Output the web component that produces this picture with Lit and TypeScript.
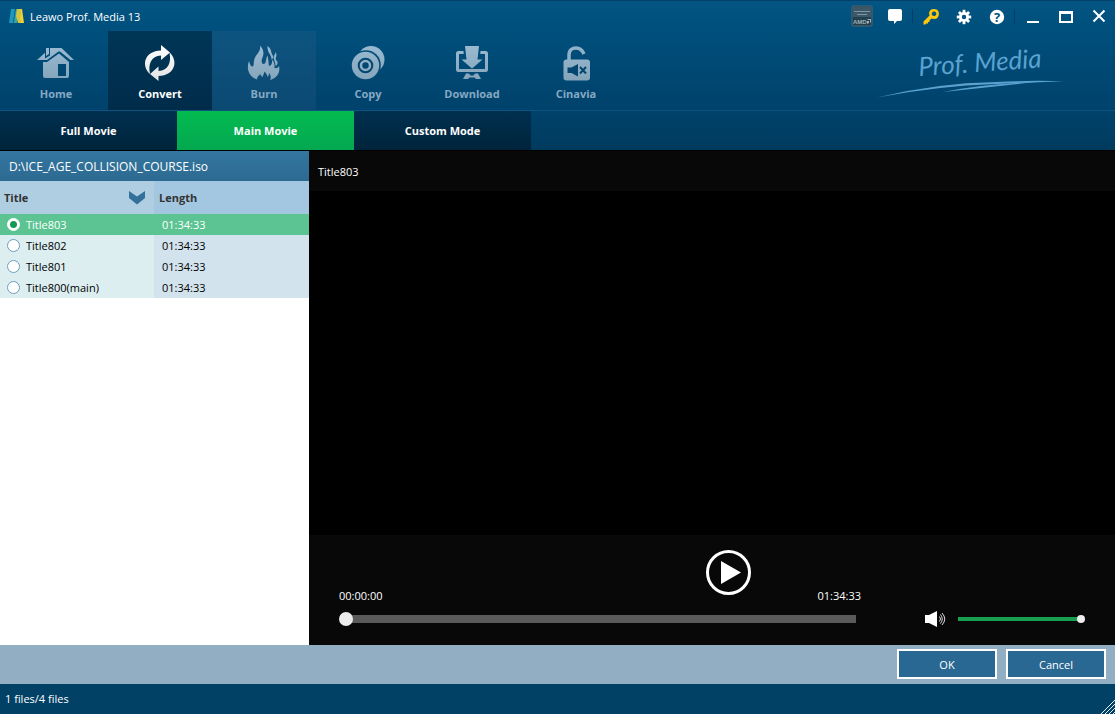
import { LitElement, html, css, svg } from "lit";
import { customElement, property, state } from "lit/decorators.js";
import { classMap } from "lit/directives/class-map.js";

const navIcons: Record<string, unknown> = {
  Home: svg`
    <path d="M1 20 12.5 9.5V8H25.5L38 20H34.5L24 11.5H22.5L11 20Z"/>
    <path class="cut" d="M9 6.5h5v9l-5 3z"/>
    <path d="M10 8h3v6l-3 2z"/>
    <path fill-rule="evenodd" d="M7 22H11L23 13.5 33 22V36a2 2 0 0 1-2 2H9a2 2 0 0 1-2-2ZM22 24V36H30V24Z"/>`,
  Convert: svg`
    <path d="M10 34C1 26 4 11 21 10.5V5L30 12.5 21 20V15.5C11 16 8 24 10 34Z"/>
    <path d="M29.5 12.5C38.5 20.5 35.5 35.5 18.5 36V41L10 34 18.5 26.5V31C28.5 30.5 31.5 22.5 29.5 12.5Z"/>`,
  Burn: svg`
    <path d="M13 39.5C5 36.5 2 29 5 21C6 25 7 26.5 8.5 26.5C10.5 26.5 9 22 11 17.5C13 13.5 17 11 16 5.5C20 9.5 20 14 18.5 17.5C17 21 17.5 24 19.5 24C22.5 24 21.5 19 23.5 15.5C24.5 20 24.5 23 25 26C27.5 25.5 28.5 23 28 19.5C31 22.5 30.5 25.5 30.5 28C33 28.5 34.5 27.5 35 26C36.5 32 33.5 38 26 40C27.5 37 26.5 35 25 33C25 35 24.5 36 23.5 37C23 34.500 22 33 20.500 31.500C20 34 19 35 18.500 37C17 36 16.500 35 16.500 34C14 36 13 37.500 13 39.500Z"/>
    <path d="M23.5 6C28 9 26.5 12 28.5 15C30 17.5 28.5 19 27.5 19.5C28 15 23 13 23.5 6Z"/>
    <path d="M31.5 12C34.5 16 29.5 18 33 21C34.5 23 33 25.5 31.5 26C32 21.5 28.5 19 30 16C30.5 14.5 31.5 14 31.5 12Z"/>`,
  Copy: svg`
    <circle cx="23" cy="19.5" r="13.5"/>
    <circle class="cut" cx="18" cy="25" r="14.8"/>
    <circle cx="17.5" cy="25.5" r="13.7"/>
    <circle class="ring" cx="17.5" cy="25.5" r="6.8"/>
    <circle class="hole" cx="17.5" cy="25.5" r="3.2"/>`,
  Download: svg`
    <path fill-rule="evenodd" d="M6.5 11H33.5A2.5 2.5 0 0 1 36 13.5V29.5A2.5 2.5 0 0 1 33.5 32H6.5A2.5 2.5 0 0 1 4 29.5V13.5A2.5 2.5 0 0 1 6.5 11ZM7 14V29H33V14Z"/>
    <path class="cut" d="M11 5H29L28 17H33L22 29H18L7 17H12Z"/>
    <path d="M13 6H27L25.5 19.5H30.5L20 28.5 9.5 19.5H14.5Z"/>
    <path d="M14 33.5h3l1.500 2h3l1.500-2h3L29 39h-5l-1.500-1.500h-5L16 39h-5Z"/>`,
  Cinavia: svg`
    <path class="line" d="M13 20.5V15C13 10 16.5 8 20 8C24 8 26.500 10.5 28 14"/>
    <rect x="7.5" y="19.5" width="26.5" height="21" rx="3"/>
    <path class="hole" d="M11.5 27.5h4L22 24V36.5l-6.5-3.5h-4Z"/>
    <path class="cross" d="M24 27l6 6.5M30 27l-6 6.5"/>`,
};

@customElement("nav-item")
export class NavItem extends LitElement {
  @property() label = "";
  @property({ type: Boolean, reflect: true }) active = false;
  @property({ type: Boolean, reflect: true }) hot = false;

  static styles = css`
    :host { display: block; width: 104px; }
    .item {
      display: flex; flex-direction: column; align-items: center;
      box-sizing: border-box; width: 100%; height: 79px; padding: 9px 0 0;
      border: 0; background: transparent; color: #86a9c3;
      font: bold 11px/20px "Open Sans", "Noto Sans", sans-serif; cursor: pointer;
    }
    .active { background: linear-gradient(#003658, #002c49); color: #fff; }
    .hot { background: linear-gradient(#0d5480, #0b4972); }
    .icon { display: block; width: 44px; height: 44px; margin-left: 4px; fill: url(#shade); }
    .cut { fill: #034b76; }
    .hole { fill: #03466f; }
    .ring { fill: none; stroke: #03466f; stroke-width: 2; }
    .line { fill: none; stroke: #91b1c8; stroke-width: 3.5; }
    .cross { fill: none; stroke: #03466f; stroke-width: 2; }
  `;

  render() {
    const [a, b] = this.active ? ["#ffffff", "#e2e2e2"] : ["#9bbbd3", "#84a4b9"];
    return html`<button class=${classMap({ item: true, active: this.active, hot: this.hot })}>
      <svg class="icon" viewBox="0 0 44 44" aria-hidden="true">
        <defs>
          <linearGradient id="shade" gradientUnits="userSpaceOnUse" x1="0" y1="5" x2="0" y2="41">
            <stop offset="0" stop-color=${a} /><stop offset="1" stop-color=${b} />
          </linearGradient>
        </defs>
        ${navIcons[this.label]}
      </svg>
      <span>${this.label}</span>
    </button>`;
  }
}

@customElement("title-bar")
export class TitleBar extends LitElement {
  static styles = css`
    :host { display: flex; align-items: center; height: 30px; padding-left: 8px; color: #fff; }
    .logo { width: 17px; height: 16px; margin-right: 5px; }
    .name { flex: 1; margin: 0; padding-top: 2px; font: 11px/18px "Open Sans", "Noto Sans", sans-serif; }
    .ctl {
      display: grid; place-items: center; width: 33px; height: 30px; padding: 0;
      border: 0; background: none; color: #fff; cursor: pointer;
    }
    .ctl svg { width: 22px; height: 22px; fill: currentColor; }
    .key { color: #fdc70c; }
    .sep { width: 1px; height: 15px; margin: 0 1px; background: #033e66; }
    .badge { font: bold 6px "Liberation Sans", sans-serif; fill: #9fb0ba; }
    .stroke { fill: none; stroke: #fff; stroke-width: 2; }
    .mark { font: bold 13px "Open Sans", sans-serif; fill: #034f7c; text-anchor: middle; }
  `;

  render() {
    return html`
      <svg class="logo" viewBox="0 0 17 16" aria-hidden="true">
        <path fill="#1d97bd" d="M3 1H7L5 15H1Z" />
        <path fill="#0f6d97" d="M7 1 5 15H7L9 6Z" />
        <path fill="#3aa6a0" d="M8 1H10L9 15H6Z" />
        <path fill="#d4c63c" d="M9 1H12L14 15H10L8 8Z" />
        <path fill="#f2d233" d="M12 1H14L16 15H13Z" />
      </svg>
      <h1 class="name">Leawo Prof. Media 13</h1>
      <button class="ctl" aria-label="Graphics acceleration">
        <svg viewBox="0 0 22 22">
          <rect x="1" y="1" width="20" height="20" rx="1" fill="#23404f" stroke="#4f6878" />
          <rect x="2" y="2" width="18" height="10" fill="#3a5868" />
          <path fill="#9fb0ba" d="M3 6h16v1H3zM6 9h10v1H6z" opacity=".7" />
          <text class="badge" x="2" y="19">AMD</text>
          <path fill="#9fb0ba" d="M16 14h4v4l-1-1v-2h-2zM16 16l2 0v2l-2 1z" />
        </svg>
      </button>
      <button class="ctl" aria-label="Feedback">
        <svg viewBox="0 0 22 22"><path d="M6 4H16A2 2 0 0 1 18 6V14A2 2 0 0 1 16 16H13L10 19V16H6A2 2 0 0 1 4 14V6A2 2 0 0 1 6 4Z" /></svg>
      </button>
      <span class="sep"></span>
      <button class="ctl key" aria-label="Register">
        <svg viewBox="0 0 22 22">
          <path fill-rule="evenodd" d="M9 8A5 5 0 1 1 14 14L11.5 13.5 9.5 15.5V17H8V18.5H6L5.5 19.5H3.5V16.5L9.500 10.5ZM14 6.500A2.300 2.300 0 1 0 14.100 6.500Z" />
        </svg>
      </button>
      <button class="ctl" aria-label="Settings">
        <svg viewBox="-11 -12 22 22">
          <path fill-rule="evenodd" d="M-5 0A5 5 0 1 0 5 0A5 5 0 1 0-5 0ZM-2.200 0A2.200 2.200 0 1 1 2.200 0A2.200 2.200 0 1 1-2.200 0Z" />
          ${[0, 45, 90, 135, 180, 225, 270, 315].map(
            (a) => svg`<rect x="-1.400" y="-7.200" width="2.800" height="3.200" transform="rotate(${a})"/>`,
          )}
        </svg>
      </button>
      <button class="ctl" aria-label="Help">
        <svg viewBox="0 0 22 22">
          <circle cx="11" cy="12" r="7.2" />
          <text class="mark" x="11" y="17">?</text>
        </svg>
      </button>
      <span class="sep"></span>
      <button class="ctl" aria-label="Minimize">
        <svg viewBox="0 0 22 22"><rect x="5" y="16" width="12" height="2" /></svg>
      </button>
      <button class="ctl" aria-label="Maximize">
        <svg viewBox="0 0 22 22"><path fill-rule="evenodd" d="M4 6H18V18H4ZM6 9V16H16V9Z" /></svg>
      </button>
      <button class="ctl" aria-label="Close">
        <svg viewBox="0 0 22 22"><path class="stroke" d="M5.5 5.5 16.5 16.5M16.5 5.5 5.5 16.5" /></svg>
      </button>
    `;
  }
}

@customElement("title-list")
export class TitleList extends LitElement {
  @property({ attribute: false }) rows: { name: string; length: string }[] = [];
  @state() private selected = 0;

  static styles = css`
    :host { display: block; background: #fff; font: 11px/21px "Open Sans", "Noto Sans", sans-serif; color: #000; }
    .file {
      margin: 0; padding: 2px 9px 0; line-height: 28px; font-size: 12px; font-weight: normal; color: #fff;
      background: linear-gradient(#33769f, #2d6a92);
    }
    .grid { width: 100%; border-collapse: collapse; table-layout: fixed; }
    th { height: 33px; padding: 0 5px; text-align: left; font-size: 11px; font-weight: bold; color: #333; background: #a3c7e0; }
    th:first-child { box-sizing: border-box; width: 154px; padding: 0 4px; background: #b0cee2; }
    .head { display: flex; align-items: center; justify-content: space-between; }
    .sort { padding: 0; border: 0; background: none; width: 26px; height: 18px; cursor: pointer; }
    .sort svg { display: block; width: 18px; height: 18px; margin-left: 4px; fill: #32719a; }
    td { height: 21px; padding: 0 8px; background: #d2e3ed; }
    td:first-child { padding: 0 7px; background: #dceef0; }
    .on td, .on td:first-child { background: #5bc492; color: #fff; }
    .pick { display: flex; align-items: center; gap: 6px; height: 21px; }
    .radio {
      appearance: none; box-sizing: border-box; width: 13px; height: 13px; margin: 0;
      border: 1px solid #6c9fc0; border-radius: 50%; background: #fff;
    }
    .radio:checked { border-color: #fff; background: radial-gradient(circle, #129a54 0 2px, #129a54 3px, #fff 4px); }
  `;

  render() {
    return html`
      <h2 class="file">D:\\ICE_AGE_COLLISION_COURSE.iso</h2>
      <table class="grid">
        <thead>
          <tr>
            <th>
              <div class="head">
                Title
                <button class="sort" aria-label="Sort by title">
                  <svg viewBox="0 0 18 18"><path d="M1 2 9 7.500 17 2V9L9 15.500 1 9Z" /></svg>
                </button>
              </div>
            </th>
            <th>Length</th>
          </tr>
        </thead>
        <tbody>
          ${this.rows.map(
            (r, i) => html`<tr class=${classMap({ on: i === this.selected })}>
              <td>
                <label class="pick">
                  <input class="radio" type="radio" name="title" .checked=${i === this.selected}
                    @change=${() => (this.selected = i)} />${r.name}
                </label>
              </td>
              <td>${r.length}</td>
            </tr>`,
          )}
        </tbody>
      </table>
    `;
  }
}

@customElement("video-player")
export class VideoPlayer extends LitElement {
  @property() heading = "";
  @property() total = "";

  static styles = css`
    :host { display: flex; flex-direction: column; background: #000; color: #fff; font: 11px/16px "Open Sans", "Noto Sans", sans-serif; }
    .name { margin: 0; padding: 2px 9px 0; line-height: 38px; font-size: 11px; font-weight: normal; background: #080808; }
    .screen { flex: 1; background: #000; }
    .controls {
      display: grid; grid-template-columns: minmax(0, 10fr) 45px minmax(0, 3fr) 224px;
      grid-template-rows: 54px 14px; row-gap: 8px; padding: 15px 30px 19px; background: #080808;
    }
    .time { align-self: end; }
    .end { justify-self: end; }
    .play { width: 45px; height: 45px; padding: 0; border: 0; background: none; cursor: pointer; }
    .play svg { display: block; width: 45px; height: 45px; fill: #fff; }
    .circle { fill: none; stroke: #fff; stroke-width: 3; }
    .slider { appearance: none; height: 14px; margin: 0; }
    .seek {
      grid-column: 1 / 4; grid-row: 2; width: calc(100% - 5px);
      background: linear-gradient(#5a5a5a, #5a5a5a) right center / calc(100% - 6px) 8px no-repeat;
    }
    .seek::-webkit-slider-thumb { appearance: none; width: 14px; height: 14px; border-radius: 50%; background: #ececec; }
    .volume { grid-column: 4; grid-row: 2; display: flex; align-items: center; justify-content: flex-end; gap: 10px; }
    .mute { width: 23px; height: 18px; padding: 0; border: 0; background: none; cursor: pointer; }
    .mute svg { display: block; width: 23px; height: 18px; fill: #fff; }
    .wave { fill: none; stroke: #ddd; stroke-width: 1; }
    .level { width: 127px; background: linear-gradient(#18a050, #18a050) left center / calc(100% - 4px) 4px no-repeat; }
    .level::-webkit-slider-thumb { appearance: none; width: 8px; height: 8px; border-radius: 50%; background: #eee; }
  `;

  render() {
    return html`
      <h2 class="name">${this.heading}</h2>
      <div class="screen"></div>
      <div class="controls">
        <span class="time">00:00:00</span>
        <button class="play" aria-label="Play">
          <svg viewBox="0 0 45 45"><circle class="circle" cx="22.5" cy="22.5" r="21" /><path d="M15 11 35 22.5 15 34Z" /></svg>
        </button>
        <span class="time end">${this.total}</span>
        <input class="slider seek" type="range" min="0" max="5673" value="0" aria-label="Position" />
        <div class="volume">
          <button class="mute" aria-label="Mute">
            <svg viewBox="0 0 23 18">
              <path d="M0 5H4L12 1V17L4 13H0Z" />
              <path class="wave" d="M14.5 6.5Q16.5 9 14.5 11.5M15.5 4.5Q19 9 15.5 13.5M17 3Q22.5 9 17 15" />
            </svg>
          </button>
          <input class="slider level" type="range" min="0" max="100" value="100" aria-label="Volume" />
        </div>
      </div>
    `;
  }
}

@customElement("app-root")
export class AppRoot extends LitElement {
  @state() private tab = "Main Movie";

  private tabs = ["Full Movie", "Main Movie", "Custom Mode"];
  private rows = ["Title803", "Title802", "Title801", "Title800(main)"].map((name) => ({ name, length: "01:34:33" }));

  static styles = css`
    :host { display: flex; flex-direction: column; min-height: 100vh; background: #004165; color: #fff; font: 11px/18px "Open Sans", "Noto Sans", sans-serif; }
    .top { border-top: 1px solid #02416a; border-bottom: 1px solid #000; background: linear-gradient(#045583, #00507d 25px, #00426b 109px, #003b5e); }
    .nav { display: flex; padding-left: 4px; border-bottom: 1px solid #0f5480; }
    .brand { width: 190px; margin: 9px 49px 0 auto; color: #5aa2d0; }
    .brand svg { display: block; width: 190px; height: 60px; fill: currentColor; }
    .script { font: italic 26px "Lato", sans-serif; }
    .tabs { display: flex; }
    .tab {
      width: 177px; height: 39px; padding: 0; border: 0; color: #fff; cursor: pointer;
      font: bold 11px/18px "Open Sans", "Noto Sans", sans-serif; background: linear-gradient(#00304f, #00243b);
    }
    .tab.on { background: linear-gradient(#02bb50, #04a850); }
    .main { flex: 1; display: grid; grid-template-columns: 309px minmax(0, 1fr); }
    .actions { display: flex; justify-content: flex-end; gap: 9px; padding: 4px 9px 5px; background: #92aec3; }
    .btn {
      box-sizing: border-box; width: 100px; height: 30px; border: 2px solid #fff; padding: 2px 0 0;
      background: #2a6894; color: #fff; font: 11px/18px "Open Sans", "Noto Sans", sans-serif; cursor: pointer;
    }
    .status { display: flex; align-items: center; justify-content: space-between; height: 30px; padding-left: 5px; }
    .grip { align-self: flex-end; width: 14px; height: 14px; stroke: #e6edf2; }
  `;

  render() {
    return html`
      <header class="top">
        <title-bar></title-bar>
        <nav class="nav">
          <nav-item label="Home"></nav-item>
          <nav-item label="Convert" active></nav-item>
          <nav-item label="Burn" hot></nav-item>
          <nav-item label="Copy"></nav-item>
          <nav-item label="Download"></nav-item>
          <nav-item label="Cinavia"></nav-item>
          <div class="brand">
            <svg viewBox="0 0 190 60">
              <text class="script" x="43" y="36" transform="rotate(-4 43 36)">Prof. Media</text>
              <path d="M1 57.5Q60 43 120 42Q160 40 188 41.5Q150 42.5 120 44Q60 46 1 57.5Z" />
              <path d="M67 52Q110 43.5 160 42Q115 47 67 52Z" />
            </svg>
          </div>
        </nav>
        <div class="tabs" role="tablist">
          ${this.tabs.map(
            (t) => html`<button class=${classMap({ tab: true, on: t === this.tab })} role="tab"
              aria-selected=${t === this.tab} @click=${() => (this.tab = t)}>${t}</button>`,
          )}
        </div>
      </header>
      <main class="main">
        <title-list .rows=${this.rows}></title-list>
        <video-player heading="Title803" total="01:34:33"></video-player>
      </main>
      <div class="actions">
        <button class="btn">OK</button>
        <button class="btn">Cancel</button>
      </div>
      <footer class="status">
        <span>1 files/4 files</span>
        <svg class="grip" viewBox="0 0 14 14" aria-hidden="true"><path d="M0 14 14 0M4 14 14 4M8 14 14 8M12 14 14 12" /></svg>
      </footer>
    `;
  }
}
